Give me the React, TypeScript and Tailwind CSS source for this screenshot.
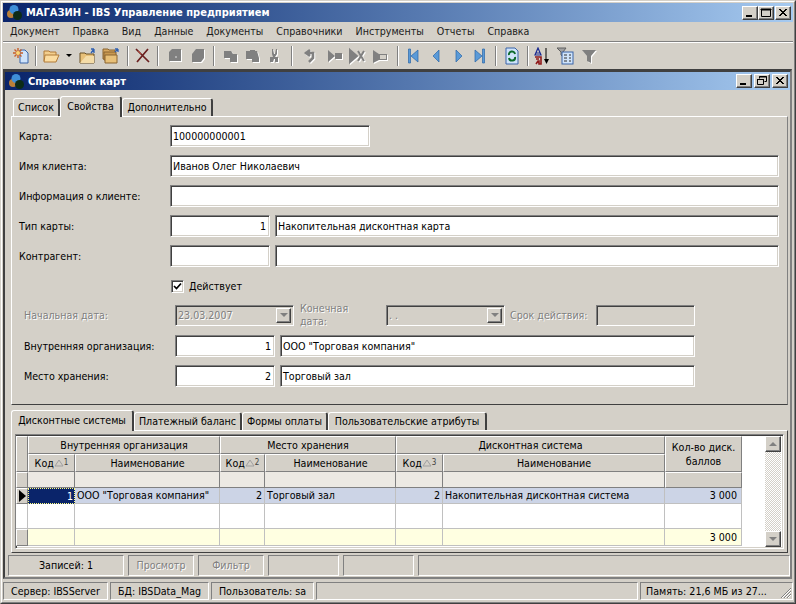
const raised = "border border-t-white border-l-white border-b-[#404040] border-r-[#404040] shadow-[inset_-1px_-1px_0_#808080]";
const sunken = "border border-t-[#808080] border-l-[#808080] border-b-white border-r-white shadow-[inset_1px_1px_0_#404040,inset_-1px_-1px_0_#d4d0c8]";
const thin = "border border-t-[#808080] border-l-[#808080] border-b-white border-r-white";
const disabledText = "text-[#808080] [text-shadow:1px_1px_0_#fff]";

function Logo() {
  return (
    <svg width="17" height="17" viewBox="0 0 17 17" className="shrink-0">
      <circle cx="5" cy="10" r="4" fill="#b9803a" />
      <circle cx="8" cy="5.5" r="4.5" fill="#3f8fd8" />
      <circle cx="11.5" cy="11.5" r="4.5" fill="#0c2c18" />
    </svg>
  );
}

function WinButton({ kind }: { kind: "min" | "max" | "restore" | "close" }) {
  return (
    <div className={`flex h-[14px] w-[16px] items-center justify-center bg-[#d4d0c8] ${raised}`}>
      <svg width="12" height="10" viewBox="0 0 12 10">
        {kind === "min" && <rect x="2" y="7" width="6" height="2" fill="#000" />}
        {kind === "max" && <path d="M1.5 1.5h9v7h-9zM1 1h10v1H1z" fill="none" stroke="#000" />}
        {kind === "restore" && (
          <path d="M3.5 2.5V.5h7v5h-2M3 1h8M1.5 3.5h6v5h-6zM1 3.5h7" fill="none" stroke="#000" />
        )}
        {kind === "close" && <path d="M2 1l7 7M3 1l7 7M9 1L2 8M10 1L3 8" stroke="#000" />}
      </svg>
    </div>
  );
}

function Sep() {
  return <div className="mx-[4px] h-[20px] w-[2px] shrink-0 border-l border-r border-l-[#808080] border-r-white" />;
}

function Icon({ w, dis, children }: { w: number; dis?: boolean; children: React.ReactNode }) {
  return (
    <div className="flex shrink-0 items-center justify-center" style={{ width: w }}>
      <svg width="18" height="18" viewBox="0 0 18 18" className={dis ? "[filter:drop-shadow(1px_1px_0_#fff)]" : ""}>
        {children}
      </svg>
    </div>
  );
}

function Toolbar() {
  const gray = "#808080";
  const blue = "#5a9ad8";
  const blueLine = "#2a66a8";
  return (
    <div className="flex h-[25px] items-center pl-[7px]">
      <Icon w={21}>
        <path d="M8 3h5l3 3v10H8z" fill="#cfe3fa" stroke="#3a64a8" />
        <path d="M6 1v10M1 6h10M2.5 2.5l7 7M9.5 2.5l-7 7" stroke="#c8602a" strokeWidth="1.4" />
        <circle cx="6" cy="6" r="2" fill="#f8d878" />
      </Icon>
      <Sep />
      <Icon w={20}>
        <path d="M2 4h5l1 1h6v9H2z" fill="#f3cf8e" stroke="#b07a38" />
        <path d="M2 15l1-7h14l-3 7z" fill="#fbdca0" stroke="#b07a38" />
      </Icon>
      <div className="flex w-[16px] shrink-0 justify-center">
        <div className="h-0 w-0 border-x-[3px] border-t-[3px] border-x-transparent border-t-black" />
      </div>
      <Icon w={22}>
        <path d="M1 6h5l1 1h8v9H1z" fill="#e8c078" stroke="#6a5024" />
        <path d="M1 16l6-7h8v7z" fill="#f4dca8" />
        <path d="M12 6l3-4M15 2v4M15 2h-3" stroke="#3060b0" strokeWidth="1.3" fill="none" />
      </Icon>
      <Icon w={24}>
        <path d="M1 2h5l1 1h6v9H1z" fill="#d8a860" stroke="#8a6430" />
        <path d="M2 5h12v8H2z" fill="#c89850" stroke="#8a6430" />
        <path d="M3 8h12v8H3z" fill="#e8c078" stroke="#8a6430" />
        <path d="M13 5l3-3M16 2v3M16 2h-3" stroke="#3060b0" strokeWidth="1.3" fill="none" />
      </Icon>
      <Sep />
      <Icon w={20}>
        <path d="M2 2l13 13M14 2L3 15" stroke="#6a1f1f" strokeWidth="1.7" />
        <path d="M4 4l3 3" stroke="#b04030" strokeWidth="1" />
      </Icon>
      <Sep />
      <Icon w={24} dis><path d="M6 2h9v12H3V5z" fill={gray} /><rect x="9" y="9" width="2" height="2" fill="#b0b0b0" /></Icon>
      <Icon w={22} dis><path d="M7 2h8v9l-3 4H3V7z" fill={gray} /></Icon>
      <Sep />
      <Icon w={24} dis><path d="M2 4h7l2 3h4v8H8v-4H2z" fill={gray} /></Icon>
      <Icon w={20} dis><path d="M2 4h4V3h5v1h2l2 7v4H8v-3H2z" fill={gray} /></Icon>
      <Icon w={24} dis><path d="M6 2h1l1 5h1l1-5h1v5l-2 3h3v5H9v-3H8l-1 3H4v-5h3L6 7z" fill={gray} /></Icon>
      <Sep />
      <Icon w={26} dis><path d="M4 6h8v5l-4 4M9 3L5 6l4 3" stroke={gray} strokeWidth="2.5" fill="none" /></Icon>
      <Icon w={24} dis><path d="M2 3l7 6-7 6zM9 6h7v6H9z" fill={gray} /></Icon>
      <Icon w={20} dis><path d="M2 3l7 6-7 6zM10 4l6 10M16 4l-6 10" fill={gray} stroke={gray} strokeWidth="2" /></Icon>
      <Icon w={26} dis><path d="M2 3l6 4h8v6H8l-6 3z" fill={gray} /><rect x="9" y="8" width="6" height="4" fill="#d4d0c8" /></Icon>
      <Sep />
      <Icon w={20}><path d="M4.5 2h2v14h-2zM14 3v12L7 9z" fill={blue} stroke={blueLine} strokeWidth="0.7" /></Icon>
      <Icon w={26}><path d="M12 3v12L6 9z" fill={blue} stroke={blueLine} strokeWidth="0.7" /></Icon>
      <Icon w={20}><path d="M6 3v12l6-6z" fill={blue} stroke={blueLine} strokeWidth="0.7" /></Icon>
      <Icon w={22}><path d="M11.5 2h2v14h-2zM4 3v12l7-6z" fill={blue} stroke={blueLine} strokeWidth="0.7" /></Icon>
      <Sep />
      <Icon w={22}>
        <path d="M3 1h9l3 3v13H3z" fill="#cfe3fa" stroke="#3a64a8" />
        <path d="M6 8a3 3 0 0 1 6-1M12 10a3 3 0 0 1-6 1" stroke="#0c6a2c" strokeWidth="2" fill="none" />
      </Icon>
      <Sep />
      <Icon w={18}>
        <path d="M5 1L2 8h6zM3 6h4" fill="none" stroke="#1a2a90" strokeWidth="1.2" />
        <path d="M2 10h6v7H6v-3H5l-2 3M3 12h3" fill="none" stroke="#901a1a" strokeWidth="1.6" />
        <path d="M13 1v13" stroke="#000" />
        <path d="M11 12h5l-2.500 5z" fill="#000" />
      </Icon>
      <Icon w={28}>
        <path d="M1 1h9L7 5v5L5 8V5z" fill="#a0a0a0" stroke="#606060" />
        <rect x="6" y="5" width="11" height="12" fill="#cfe3fa" stroke="#3a64a8" />
        <path d="M8 8h3M13 8h2M8 11h3M13 11h2M8 14h3M13 14h2" stroke="#303030" />
      </Icon>
      <Icon w={20} dis>
        <path d="M2 3h14l-5 6v7l-4-2V9z" fill={gray} />
      </Icon>
    </div>
  );
}

function TextBox({ value, w, right, grow }: { value?: string; w?: string; right?: boolean; grow?: boolean }) {
  return (
    <div className={`flex h-[22px] items-center bg-white px-[2px] text-black ${sunken} ${w ?? ""} ${grow ? "grow" : ""} ${right ? "justify-end pr-[3px]" : ""}`}>
      {value}
    </div>
  );
}

function Row({ label, children, wide }: { label: string; children: React.ReactNode; wide?: boolean }) {
  return (
    <div className={`mb-[8px] flex h-[22px] items-center ${wide ? "pl-[7px] pr-[8px]" : "pl-[12px] pr-[92px]"}`}>
      <span className="w-[151px] shrink-0">{label}</span>
      {children}
    </div>
  );
}

function Combo({ value, w }: { value: string; w: string }) {
  return (
    <div className={`flex h-[21px] items-center justify-between pl-[2px] ${sunken} ${w} ${disabledText}`}>
      {value}
      <div className={`mr-[2px] flex h-[15px] w-[15px] items-center justify-center bg-[#d4d0c8] ${raised}`}>
        <div className="h-0 w-0 border-x-[4px] border-t-[4px] border-x-transparent border-t-[#808080]" />
      </div>
    </div>
  );
}

function TabButton({ label, active, w }: { label: string; active?: boolean; w: string }) {
  return (
    <div
      className={`flex shrink-0 items-center justify-center rounded-t-[3px] border-l border-t border-r-2 border-l-white border-t-white border-r-[#404040] ${w} ${
        active ? "relative z-10 -mb-[1px] h-[21px] bg-[#d4d0c8] pb-[2px]" : "h-[18px] bg-[#d4d0c8]"
      }`}
    >
      {label}
    </div>
  );
}

function Sort({ n }: { n: number }) {
  return (
    <span className="flex items-center text-[8px] text-[#404040]">
      <svg width="10" height="8" viewBox="0 0 10 8">
        <path d="M5 1L1 7h8z" fill="none" stroke="#a0a0a0" />
      </svg>
      {n}
    </span>
  );
}

const head = "flex items-center justify-center bg-[#d4d0c8] border-t border-l border-r border-b border-t-white border-l-white border-r-[#808080] border-b-[#808080]";
const cell = "flex items-center border-r border-b border-[#c0c0c0] px-[2px]";

function Grid() {
  const sel = "bg-[#ccd4e6]";
  return (
    <div className="grid grow grid-cols-[12px_47px_145px_45px_131px_47px_222px_77px] grid-rows-[18px_18px_16px_16px_25px_17px] content-start">
      <div className={`${head} row-span-2`} />
      <div className={`${head} col-span-2`}>Внутренняя организация</div>
      <div className={`${head} col-span-2`}>Место хранения</div>
      <div className={`${head} col-span-2`}>Дисконтная система</div>
      <div className={`${head} row-span-2 text-center leading-[14px]`}>Кол-во диск.<br />баллов</div>

      <div className={`${head} justify-between px-[3px]`}>Код<Sort n={1} /></div>
      <div className={head}>Наименование</div>
      <div className={`${head} justify-between px-[2px]`}>Код<Sort n={2} /></div>
      <div className={head}>Наименование</div>
      <div className={`${head} justify-between px-[3px]`}>Код<Sort n={3} /></div>
      <div className={head}>Наименование</div>

      <div className={head} />
      {[0, 1, 2, 3, 4, 5].map((i) => (
        <div key={i} className="border-r border-b border-r-[#808080] border-b-[#808080] bg-[#ece9e3]" />
      ))}
      <div className={head} />

      <div className={head}>
        <div className="h-0 w-0 border-y-[6px] border-l-[7px] border-y-transparent border-l-black" />
      </div>
      <div className="flex items-center justify-end border border-dotted border-[#ffff80] bg-[#0a246a] px-[1px] text-white">1</div>
      <div className={`${cell} ${sel}`}>ООО "Торговая компания"</div>
      <div className={`${cell} justify-end ${sel}`}>2</div>
      <div className={`${cell} ${sel}`}>Торговый зал</div>
      <div className={`${cell} justify-end ${sel}`}>2</div>
      <div className={`${cell} ${sel}`}>Накопительная дисконтная система</div>
      <div className={`${cell} justify-end pr-[4px] ${sel}`}>3 000</div>

      {[0, 1, 2, 3, 4, 5, 6, 7].map((i) => (
        <div key={i} className={`${cell} bg-white`} />
      ))}

      <div className={head} />
      {[0, 1, 2, 3, 4, 5].map((i) => (
        <div key={i} className={`${cell} bg-[#ffffe1]`} />
      ))}
      <div className={`${cell} justify-end bg-[#ffffe1] pr-[4px]`}>3 000</div>
    </div>
  );
}

function Scrollbar() {
  return (
    <div className="flex w-[16px] shrink-0 flex-col bg-[repeating-conic-gradient(#fff_0_25%,#d4d0c8_0_50%)] bg-[length:2px_2px]">
      <div className={`flex h-[16px] items-center justify-center bg-[#d4d0c8] ${raised}`}>
        <div className="h-0 w-0 border-x-[4px] border-b-[4px] border-x-transparent border-b-[#808080]" />
      </div>
      <div className="grow" />
      <div className={`flex h-[16px] items-center justify-center bg-[#d4d0c8] ${raised}`}>
        <div className="h-0 w-0 border-x-[4px] border-t-[4px] border-x-transparent border-t-[#808080]" />
      </div>
    </div>
  );
}

export default function App() {
  const font = "[font-family:'DejaVu_Sans_Condensed','Noto_Sans',sans-serif]";
  return (
    <div className={`h-[604px] w-[796px] overflow-hidden border border-t-[#d4d0c8] border-l-[#d4d0c8] border-b-[#404040] border-r-[#404040] bg-[#d4d0c8] text-[10.6px] leading-none text-[#000] ${font}`}>
      <div className="flex h-full flex-col border border-t-white border-l-white border-b-[#808080] border-r-[#808080] p-[1px]">
        <div className="flex h-[19px] shrink-0 items-center bg-gradient-to-r from-[#0a246a] to-[#a6caf0] pl-[3px] pr-[2px] text-[11px] font-bold text-white">
          <Logo />
          <span className="ml-[3px] grow">МАГАЗИН - IBS Управление предприятием</span>
          <div className="flex">
            <WinButton kind="min" />
            <WinButton kind="max" />
            <div className="ml-[1px]"><WinButton kind="close" /></div>
          </div>
        </div>

        <div className="flex h-[19px] shrink-0 items-center gap-[13px] pl-[7px] text-[#1a1a1a]">
          {["Документ", "Правка", "Вид", "Данные", "Документы", "Справочники", "Инструменты", "Отчеты", "Справка"].map((m) => (
            <span key={m}>{m}</span>
          ))}
        </div>
        <div className="h-[2px] shrink-0 border-t border-b border-t-[#808080] border-b-white" />
        <Toolbar />

        <div className="mt-[1px] mr-[1px] flex h-[510px] shrink-0 flex-col border-2 border-t-[3px] border-[#404040] border-r-[#808080] border-b-[#808080]">
          <div className="flex h-[18px] shrink-0 items-center bg-gradient-to-r from-[#0a246a] to-[#a6caf0] pl-[3px] pr-[2px] text-[11px] font-bold text-white">
            <Logo />
            <span className="ml-[3px] grow">Справочник карт</span>
            <div className="flex gap-[2px]">
              <WinButton kind="min" />
              <WinButton kind="restore" />
              <WinButton kind="close" />
            </div>
          </div>

          <div className="flex h-[26px] shrink-0 items-end pl-[8px] pt-[4px]">
            <TabButton label="Список" w="w-[47px]" />
            <TabButton label="Свойства" active w="w-[62px]" />
            <TabButton label="Дополнительно" w="w-[91px]" />
          </div>
          <div className="ml-[6px] mr-[2px] h-[289px] shrink-0 border border-t-white border-l-white border-b-[#404040] border-r-[#808080] pt-[8px]">
            <Row label="Карта:" wide><TextBox value="100000000001" w="w-[200px]" /></Row>
            <Row label="Имя клиента:" wide><TextBox value="Иванов Олег Николаевич" grow /></Row>
            <Row label="Информация о клиенте:" wide><TextBox grow /></Row>
            <Row label="Тип карты:" wide>
              <TextBox value="1" right w="w-[100px] mr-[5px]" />
              <TextBox value="Накопительная дисконтная карта" grow />
            </Row>
            <Row label="Контрагент:" wide>
              <TextBox w="w-[100px] mr-[5px]" />
              <TextBox grow />
            </Row>
            <div className="mb-[6px] flex h-[23px] items-center pl-[159px]">
              <div className={`mr-[5px] flex h-[13px] w-[13px] items-center justify-center bg-white ${sunken}`}>
                <svg width="9" height="9" viewBox="0 0 9 9">
                  <path d="M1 4l2.500 2.500L8 1.500" fill="none" stroke="#000" strokeWidth="1.7" />
                </svg>
              </div>
              Действует
            </div>
            <div className="mb-[9px] flex h-[22px] items-center pl-[12px] pr-[92px]">
              <span className={`w-[151px] shrink-0 ${disabledText}`}>Начальная дата:</span>
              <Combo value="23.03.2007" w="w-[119px]" />
              <span className={`ml-[6px] w-[86px] shrink-0 leading-[13px] ${disabledText}`}>Конечная<br />дата:</span>
              <Combo value=" .  ." w="w-[119px]" />
              <span className={`ml-[5px] w-[86px] shrink-0 ${disabledText}`}>Срок действия:</span>
              <div className={`h-[21px] grow ${sunken}`} />
            </div>
            <Row label="Внутренняя организация:">
              <TextBox value="1" right w="w-[100px] mr-[5px]" />
              <TextBox value={'ООО "Торговая компания"'} grow />
            </Row>
            <Row label="Место хранения:">
              <TextBox value="2" right w="w-[100px] mr-[5px]" />
              <TextBox value="Торговый зал" grow />
            </Row>
          </div>

          <div className="flex h-[25px] shrink-0 items-end pl-[6px]">
            <TabButton label="Дисконтные системы" active w="w-[123px]" />
            <TabButton label="Платежный баланс" w="w-[108px]" />
            <TabButton label="Формы оплаты" w="w-[86px]" />
            <TabButton label="Пользовательские атрибуты" w="w-[159px]" />
          </div>
          <div className="ml-[6px] mr-[2px] h-[123px] shrink-0 border border-t-white border-l-white border-b-[#404040] border-r-[#404040] p-[3px]">
            <div className={`flex h-full bg-white py-[1px] pr-[2px] ${sunken}`}>
              <Grid />
              <Scrollbar />
            </div>
          </div>

          <div className="mt-[2px] flex h-[21px] shrink-0 gap-[4px] pl-[3px]">
            <div className={`flex w-[116px] items-center justify-center ${thin}`}>Записей: 1</div>
            <div className={`flex w-[66px] items-center justify-center ${thin} ${disabledText}`}>Просмотр</div>
            <div className={`flex w-[66px] items-center justify-center ${thin} ${disabledText}`}>Фильтр</div>
            <div className={`w-[71px] ${thin}`} />
            <div className={`w-[71px] ${thin}`} />
            <div className={`grow ${thin}`} />
          </div>
        </div>

        <div className="mt-[3px] flex h-[18px] shrink-0 gap-[2px]">
          <div className={`flex w-[105px] items-center justify-center ${thin}`}>Сервер: IBSServer</div>
          <div className={`flex w-[99px] items-center justify-center ${thin}`}>БД: IBSData_Mag</div>
          <div className={`flex w-[103px] items-center justify-center ${thin}`}>Пользователь: sa</div>
          <div className={`w-[322px] ${thin}`} />
          <div className={`relative flex grow items-center pl-[5px] ${thin}`}>
            Память: 21,6 МБ из 27...
            <svg width="12" height="12" viewBox="0 0 12 12" className="absolute right-0 bottom-0">
              <path d="M11 1L1 11M11 4L4 11M11 7l-4 4" stroke="#808080" />
              <path d="M11 2L2 11M11 5l-6 6M11 8l-3 3" stroke="#fff" />
            </svg>
          </div>
        </div>
      </div>
    </div>
  );
}
